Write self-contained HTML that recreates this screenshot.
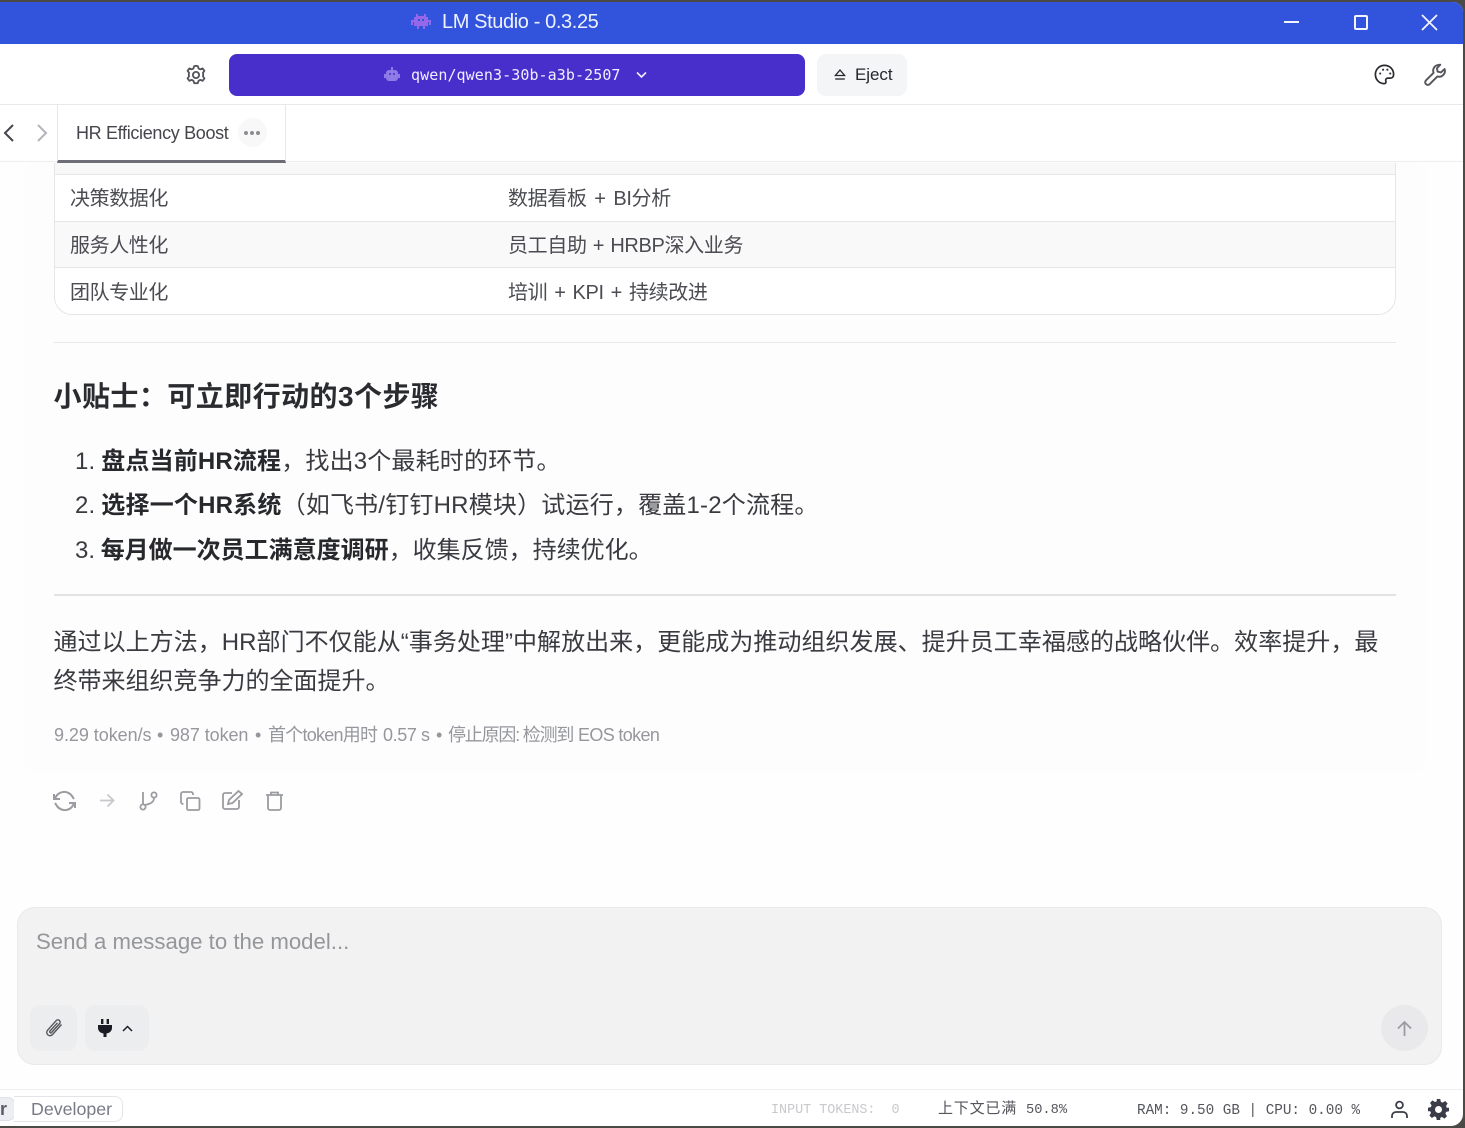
<!DOCTYPE html>
<html lang="zh"><head><meta charset="utf-8"><style>
*{box-sizing:border-box}
html,body{margin:0;padding:0;width:1465px;height:1128px;overflow:hidden;background:#4b4a45}
body{font-family:"Liberation Sans","Noto Sans CJK SC",sans-serif;color:#2f3136;position:relative}
.a{position:absolute;white-space:nowrap}
svg{position:absolute;overflow:visible}
b{font-weight:700;color:#27282c}
.m{top:722px;font-size:18px;line-height:26px;color:#96979c}
.t{font-size:20px;line-height:28px;color:#4b4c52}
</style></head><body>
<div class="a" style="left:0;top:2px;width:1463px;height:1124px;background:#fff;border-radius:0 10px 12px 0;overflow:hidden">
<div class="a" style="left:0;top:0;width:1463px;height:42px;background:#3254dc"></div>
<div class="a" style="left:0;top:158px;width:1463px;height:930px;background:#fefefe"></div>
<div class="a" style="left:24px;top:160px;width:1402px;height:610px;background:#fdfdfe;border-radius:10px"></div>
<div class="a" style="left:0;top:102px;width:1463px;height:1px;background:#e9e9ec"></div>
<div class="a" style="left:0;top:159px;width:1463px;height:1px;background:#eeeeef"></div>
<div class="a" style="left:0;top:1087px;width:1463px;height:1px;background:#eeeeef"></div>
</div>

<svg style="left:410px;top:13px" width="22" height="18" viewBox="0 0 22 18" fill="#9468e8"><path d="M6 1h2v2h6V1h2v3h2v3h3v5h-2v-3h-1v4h-3v3h-2v-3H9v3H7v-3H4V9H3v3H1V7h3V4h2z"/><rect x="8" y="6" width="2" height="2" fill="#3254dc"/><rect x="12" y="6" width="2" height="2" fill="#3254dc"/></svg>
<div class="a" style="left:442px;top:10px;font-size:20px;line-height:25px;letter-spacing:-.39px;color:#eef2ff">LM Studio - 0.3.25</div>
<div class="a" style="left:1284px;top:21px;width:15px;height:2px;background:#f2f4ff"></div>
<div class="a" style="left:1354px;top:15px;width:14px;height:15px;border:2px solid #f2f4ff;border-radius:2px"></div>
<svg style="left:1422px;top:15px" width="15" height="15" viewBox="0 0 15 15" stroke="#f2f4ff" stroke-width="1.8" fill="none"><path d="M0 0l15 15M15 0L0 15"/></svg>

<svg style="left:185px;top:64px" width="22" height="22" viewBox="0 0 24 24" fill="none" stroke="#55565c" stroke-width="2" stroke-linejoin="round"><path d="M12 2l2 .3.8 2.6 1.9.9 2.5-1 2 2.6-1.6 2.1.3 2-.3 2 1.6 2.2-2 2.6-2.5-1-1.9 1-.8 2.6h-4l-.8-2.6-1.9-1-2.5 1-2-2.6 1.6-2.2-.3-2 .3-2-1.6-2.1 2-2.6 2.5 1 1.9-.9.8-2.6z"/><circle cx="12" cy="12" r="3.4"/></svg>
<div class="a" style="left:229px;top:54px;width:576px;height:42px;background:#482fcb;border-radius:8px"></div>
<svg style="left:384px;top:67px" width="16" height="15" viewBox="0 0 16 15" fill="#8f7be6"><rect x="7" y="0" width="2" height="3"/><rect x="2" y="3" width="12" height="11" rx="3"/><rect x="0" y="7" width="2" height="4"/><rect x="14" y="7" width="2" height="4"/><circle cx="6" cy="7" r="1" fill="#482fcb"/><circle cx="10" cy="7" r="1" fill="#482fcb"/></svg>
<div class="a" style="left:411px;top:65px;font-family:'DejaVu Sans Mono',monospace;font-size:15px;line-height:20px;color:#f1eeff;letter-spacing:.08px">qwen/qwen3-30b-a3b-2507</div>
<svg style="left:636px;top:71px" width="11" height="8" viewBox="0 0 11 8" fill="none" stroke="#f1eeff" stroke-width="1.6"><path d="M1 1.5l4.5 4.5L10 1.5"/></svg>
<div class="a" style="left:817px;top:54px;width:90px;height:42px;background:#f4f5f7;border-radius:9px"></div>
<svg style="left:834px;top:69px" width="12" height="12" viewBox="0 0 12 12" fill="none" stroke="#26272c" stroke-width="1.3"><path d="M6 1l4.6 5.5H1.4z"/><path d="M1.2 10h9.6"/></svg>
<div class="a" style="left:855px;top:63px;font-size:17px;line-height:24px;letter-spacing:-.05px;color:#26272c">Eject</div>
<svg style="left:1373px;top:63px" width="23" height="23" viewBox="0 0 24 24" fill="none" stroke="#2a2b30" stroke-width="1.800"><path d="M12 2.500C6.500 2.500 2.500 6.700 2.500 12s4 9.500 9 9.500c1.800 0 2.400-1.200 1.900-2.500-.6-1.700.3-3.200 2.100-3.200h2.700c2 0 3.300-1.600 3.300-3.800 0-5.500-4-9.500-9.500-9.500z"/><g stroke="none" fill="#2a2b30"><circle cx="7.500" cy="11" r="1.100"/><circle cx="10.500" cy="7" r="1.100"/><circle cx="15" cy="7" r="1.100"/><circle cx="18" cy="11" r="1.100"/></g></svg>
<svg style="left:1424px;top:63px" width="23" height="23" viewBox="0 0 24 24" fill="none" stroke="#55565c" stroke-width="2" stroke-linejoin="round"><path d="M15 2a6 6 0 0 1 2-.2l-3.500 3.700.7 3.500 3.500.8L21.500 6.300A6 6 0 0 1 14 14L6 22a2.500 2.500 0 0 1-4-3.800l8-8A6 6 0 0 1 15 2z"/></svg>

<svg style="left:3px;top:124px" width="12" height="18" viewBox="0 0 12 18" fill="none" stroke="#44454b" stroke-width="2"><path d="M10 1L2 9l8 8"/></svg>
<svg style="left:36px;top:124px" width="12" height="18" viewBox="0 0 12 18" fill="none" stroke="#b4b5ba" stroke-width="2"><path d="M2 1l8 8-8 8"/></svg>
<div class="a" style="left:57px;top:105px;width:229px;height:58px;background:#fff;border-left:1px solid #e8e8ea;border-right:1px solid #e8e8ea;border-bottom:3px solid #6d6d78"></div>
<div class="a" style="left:76px;top:121px;font-size:18px;line-height:25px;letter-spacing:-.33px;color:#45464c">HR Efficiency Boost</div>
<div class="a" style="left:238px;top:118px;width:29px;height:29px;border-radius:50%;background:#f8f8f8"></div>
<div class="a" style="left:244px;top:131px;width:4px;height:4px;border-radius:50%;background:#8c8d93;box-shadow:6px 0 #8c8d93,12px 0 #8c8d93"></div>

<div class="a" style="left:54px;top:163px;width:1342px;height:152px;border:1px solid #e6e6e8;border-top:0;border-radius:0 0 18px 18px;background:#fff;overflow:hidden">
<div class="a" style="left:0;top:0;width:1340px;height:12px;background:#f8f8f9;border-bottom:1px solid #e6e6e8"></div>
<div class="a" style="left:0;top:58px;width:1340px;height:47px;background:#f9f9fa;border-top:1px solid #e6e6e8;border-bottom:1px solid #e6e6e8"></div>
</div>
<div class="a t" style="left:70px;top:185px;letter-spacing:-.4px">决策数据化</div>
<div class="a t" style="left:508px;top:185px;letter-spacing:-.35px;word-spacing:2.500px">数据看板 + BI分析</div>
<div class="a t" style="left:70px;top:232px;letter-spacing:-.4px">服务人性化</div>
<div class="a t" style="left:508px;top:232px;letter-spacing:-.35px;word-spacing:1px">员工自助 + HRBP深入业务</div>
<div class="a t" style="left:70px;top:279px;letter-spacing:-.4px">团队专业化</div>
<div class="a t" style="left:508px;top:279px;letter-spacing:-.35px;word-spacing:1.750px">培训 + KPI + 持续改进</div>

<div class="a" style="left:54px;top:342px;width:1342px;height:1px;background:#e8e8ea"></div>
<div class="a" style="left:53.500px;top:377px;font-size:28px;line-height:40px;letter-spacing:.45px;font-weight:700;color:#2a2b2f">小贴士：可立即行动的3个步骤</div>
<div class="a" style="left:75px;top:445px;font-size:24px;line-height:34px;letter-spacing:.17px;color:#3a3b40">1. <b style="margin-left:-1px">盘点当前HR流程</b>，找出3个最耗时的环节。</div>
<div class="a" style="left:75px;top:489px;font-size:24px;line-height:34px;letter-spacing:.2px;color:#3a3b40">2. <b style="margin-left:-1px">选择一个HR系统</b>（如飞书/钉钉HR模块）试运行，覆盖1-2个流程。</div>
<div class="a" style="left:75px;top:534px;font-size:24px;line-height:34px;color:#3a3b40">3. <b style="margin-left:-1px">每月做一次员工满意度调研</b>，收集反馈，持续优化。</div>
<div class="a" style="left:54px;top:594px;width:1342px;height:2px;background:#e3e3e5"></div>
<div class="a" style="left:53.500px;top:626px;font-size:24px;line-height:34px;letter-spacing:.04px;color:#3a3b40">通过以上方法，HR部门不仅能从“事务处理”中解放出来，更能成为推动组织发展、提升员工幸福感的战略伙伴。效率提升，最</div>
<div class="a" style="left:53.500px;top:665px;font-size:24px;line-height:34px;color:#3a3b40">终带来组织竞争力的全面提升。</div>

<div class="a m" style="left:54px;letter-spacing:-.05px">9.29 token/s</div>
<div class="a m" style="left:157px">•</div>
<div class="a m" style="left:170px;letter-spacing:-.08px">987 token</div>
<div class="a m" style="left:255px">•</div>
<div class="a m" style="left:268px;letter-spacing:-.75px">首个token用时</div>
<div class="a m" style="left:383px;letter-spacing:-.4px">0.57 s</div>
<div class="a m" style="left:436px">•</div>
<div class="a m" style="left:448px;letter-spacing:-1.200px">停止原因: 检测到</div>
<div class="a m" style="left:578px;letter-spacing:-.65px">EOS token</div>

<svg style="left:53px;top:790px" width="23" height="22" viewBox="0 0 23 22" fill="none" stroke="#9b9ca1" stroke-width="2"><path d="M2 9a9.500 9.500 0 0 1 17-3l2 3M21 13a9.500 9.500 0 0 1-17 3l-2-3"/><path d="M1 4v5h6M22 18v-5h-6"/></svg>
<svg style="left:99px;top:793px" width="16" height="15" viewBox="0 0 16 15" fill="none" stroke="#c8c9cc" stroke-width="1.800"><path d="M1 7.500h13M8.500 1.500l6 6-6 6"/></svg>
<svg style="left:139px;top:791px" width="19" height="20" viewBox="0 0 19 20" fill="none" stroke="#9b9ca1" stroke-width="1.800"><circle cx="4" cy="16" r="2.600"/><circle cx="15" cy="4" r="2.600"/><path d="M4 13V1M15 7c0 5-5 6-9 7"/></svg>
<svg style="left:180px;top:791px" width="21" height="20" viewBox="0 0 21 20" fill="none" stroke="#9b9ca1" stroke-width="1.800"><rect x="7" y="7" width="12.500" height="12" rx="1.500"/><path d="M3.500 13H3a2 2 0 0 1-2-2V3a2 2 0 0 1 2-2h8a2 2 0 0 1 2 2v1"/></svg>
<svg style="left:222px;top:790px" width="21" height="20" viewBox="0 0 21 20" fill="none" stroke="#9b9ca1" stroke-width="1.800"><path d="M10 3H3a2 2 0 0 0-2 2v12a2 2 0 0 0 2 2h12a2 2 0 0 0 2-2v-7"/><path d="M6 14l1-4L16.500 1 20 4l-9.500 9z"/></svg>
<svg style="left:265px;top:791px" width="19" height="20" viewBox="0 0 19 20" fill="none" stroke="#9b9ca1" stroke-width="1.800"><path d="M1 4h17M6 4V1.500h7V4M3 4v13a2 2 0 0 0 2 2h9a2 2 0 0 0 2-2V4"/></svg>

<div class="a" style="left:17px;top:907px;width:1425px;height:158px;background:#f2f2f3;border:1px solid #e9e9eb;border-radius:18px"></div>
<div class="a" style="left:36px;top:928px;font-size:22.200px;line-height:28px;color:#95969a">Send a message to the model...</div>
<div class="a" style="left:30px;top:1005px;width:47px;height:46px;background:#ecedef;border-radius:10px"></div>
<svg style="left:45px;top:1019px" width="18" height="18" viewBox="0 0 18 18" fill="none" stroke="#55565c" stroke-width="1.400"><path d="M16.500 5.500L7.500 15.500a3.200 3.200 0 0 1-5-4.200L11 1.800a2.200 2.200 0 0 1 3.700 2.700L6.500 13.500a.9.9 0 0 1-1.500-1.500L12.500 3.800"/></svg>
<div class="a" style="left:85px;top:1005px;width:64px;height:46px;background:#ecedef;border-radius:10px"></div>
<svg style="left:98px;top:1019px" width="14" height="18" viewBox="0 0 14 18" fill="#1a1c26"><rect x="3" y="0" width="2.400" height="5"/><rect x="8.600" y="0" width="2.400" height="5"/><path d="M0 6h14v3c0 3-2.500 5-5.500 5.500V18h-3v-3.500C2.500 14 0 12 0 9z"/></svg>
<svg style="left:122px;top:1025px" width="11" height="7" viewBox="0 0 11 7" fill="none" stroke="#1a1c26" stroke-width="1.500"><path d="M1 6l4.500-4.500L10 6"/></svg>
<div class="a" style="left:1381px;top:1005px;width:47px;height:46px;background:#e9e9eb;border-radius:50%"></div>
<svg style="left:1397px;top:1021px" width="15" height="15" viewBox="0 0 15 15" fill="none" stroke="#9b9ca1" stroke-width="1.800"><path d="M7.500 15V1M1 7.500L7.500 1 14 7.500"/></svg>

<div class="a" style="left:-20px;top:1097px;width:35px;height:24px;background:#eceef3;border:1px solid #dfe1e8;border-radius:7px"></div>
<div class="a" style="left:0;top:1098px;font-size:18px;line-height:22px;font-weight:700;color:#5a5c68">r</div>
<div class="a" style="left:14px;top:1096px;width:109px;height:26px;border:1px solid #e4e4e8;border-left:0;border-radius:0 8px 8px 0;background:#fff"></div>
<div class="a" style="left:31px;top:1097px;font-size:17.800px;line-height:24px;color:#787a86">Developer</div>
<div class="a" style="left:771px;top:1102px;font-family:'Liberation Mono',monospace;font-size:13.400px;line-height:18px;color:#c8c9cc;white-space:pre">INPUT TOKENS:  0</div>
<div class="a" style="left:938px;top:1099px;font-size:15px;line-height:20px;color:#55565c;letter-spacing:.8px">上下文已满</div>
<div class="a" style="left:1026px;top:1102px;font-family:'Liberation Mono',monospace;font-size:13.700px;line-height:18px;color:#55565c">50.8%</div>
<div class="a" style="left:1137px;top:1102px;font-family:'Liberation Mono',monospace;font-size:14.300px;line-height:18px;color:#55565c;white-space:pre">RAM: 9.50 GB | CPU: 0.00 %</div>
<svg style="left:1391px;top:1100px" width="17" height="19" viewBox="0 0 17 19" fill="none" stroke="#3a3c47" stroke-width="1.800"><circle cx="8.500" cy="5" r="3.400"/><path d="M1 18v-2a4 4 0 0 1 4-4h7a4 4 0 0 1 4 4v2"/></svg>
<svg style="left:1428px;top:1099px" width="21" height="21" viewBox="0 0 24 24" fill="#3a3c47"><path fill-rule="evenodd" d="M10 0h4l.7 3.300 2 .8 2.900-1.800 2.800 2.800-1.800 2.900.8 2L24 10v4l-3.300.7-.8 2 1.800 2.900-2.800 2.800-2.900-1.800-2 .8L14 24h-4l-.7-3.300-2-.8-2.900 1.800-2.800-2.800 1.800-2.900-.8-2L0 14v-4l3.300-.7.8-2L2.300 4.400l2.800-2.800L8 3.400l2-.8zM12 8a4 4 0 1 0 0 8 4 4 0 0 0 0-8z"/></svg>
</body></html>
